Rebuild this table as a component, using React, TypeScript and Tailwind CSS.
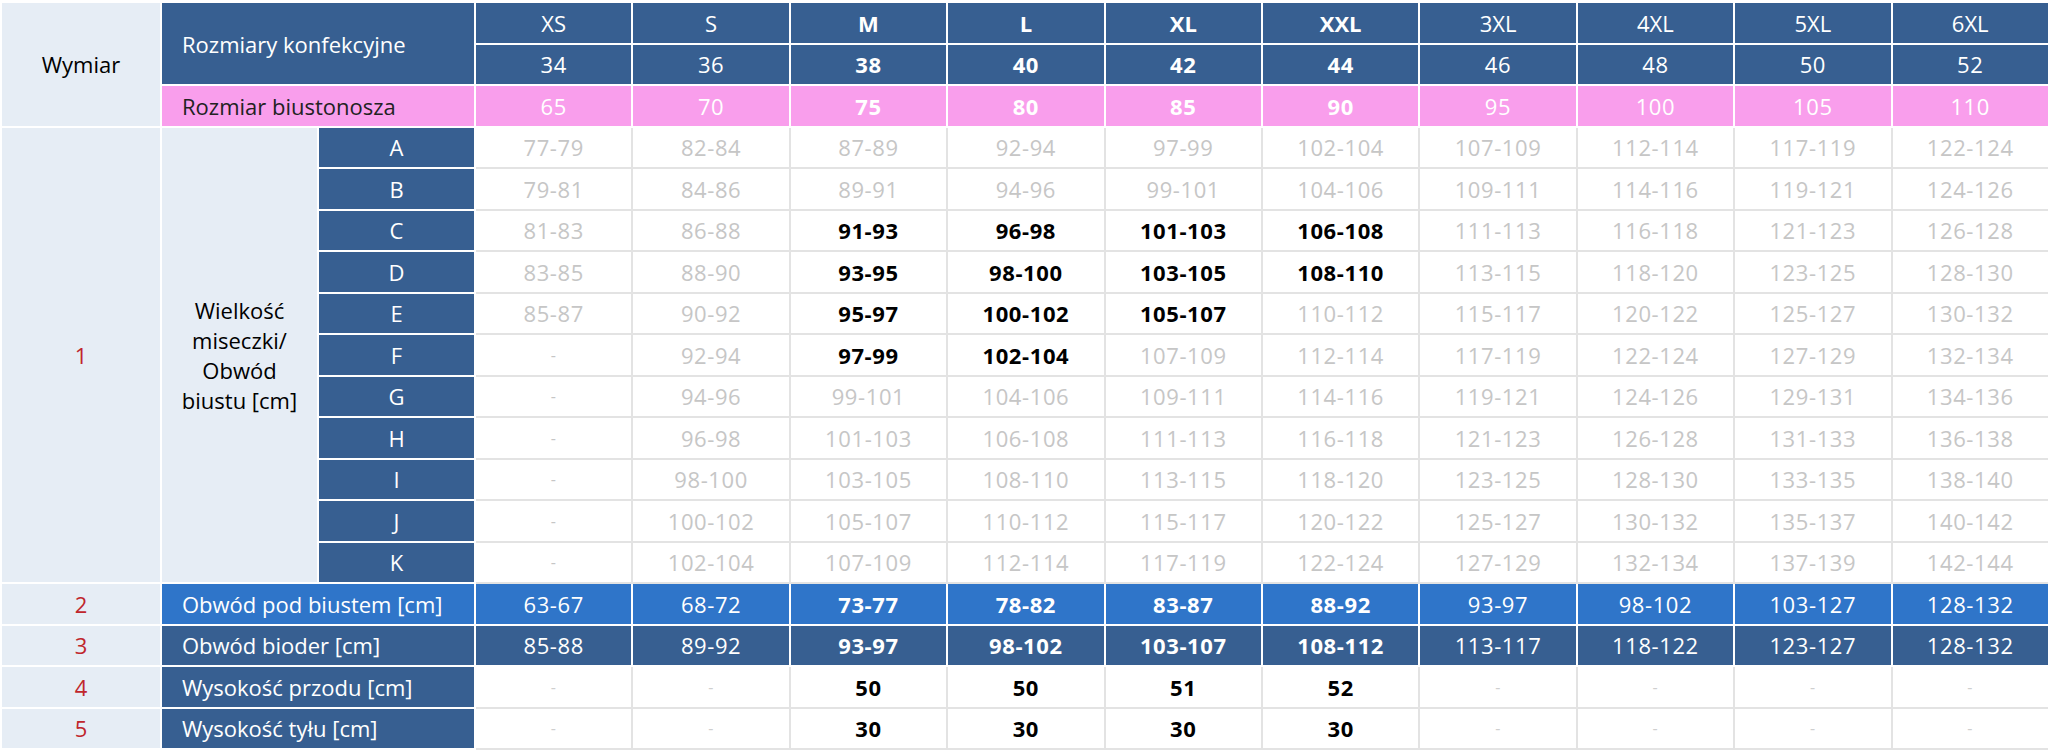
import React from 'react';

const sizes = ['XS', 'S', 'M', 'L', 'XL', 'XXL', '3XL', '4XL', '5XL', '6XL'];
const eu = ['34', '36', '38', '40', '42', '44', '46', '48', '50', '52'];
const bra = ['65', '70', '75', '80', '85', '90', '95', '100', '105', '110'];
const boldCols = [2, 3, 4, 5];

// cup rows: [letter, values, bold columns]
const cups: [string, string[], number[]][] = [
  ['A', ['77-79', '82-84', '87-89', '92-94', '97-99', '102-104', '107-109', '112-114', '117-119', '122-124'], []],
  ['B', ['79-81', '84-86', '89-91', '94-96', '99-101', '104-106', '109-111', '114-116', '119-121', '124-126'], []],
  ['C', ['81-83', '86-88', '91-93', '96-98', '101-103', '106-108', '111-113', '116-118', '121-123', '126-128'], [2, 3, 4, 5]],
  ['D', ['83-85', '88-90', '93-95', '98-100', '103-105', '108-110', '113-115', '118-120', '123-125', '128-130'], [2, 3, 4, 5]],
  ['E', ['85-87', '90-92', '95-97', '100-102', '105-107', '110-112', '115-117', '120-122', '125-127', '130-132'], [2, 3, 4]],
  ['F', ['-', '92-94', '97-99', '102-104', '107-109', '112-114', '117-119', '122-124', '127-129', '132-134'], [2, 3]],
  ['G', ['-', '94-96', '99-101', '104-106', '109-111', '114-116', '119-121', '124-126', '129-131', '134-136'], []],
  ['H', ['-', '96-98', '101-103', '106-108', '111-113', '116-118', '121-123', '126-128', '131-133', '136-138'], []],
  ['I', ['-', '98-100', '103-105', '108-110', '113-115', '118-120', '123-125', '128-130', '133-135', '138-140'], []],
  ['J', ['-', '100-102', '105-107', '110-112', '115-117', '120-122', '125-127', '130-132', '135-137', '140-142'], []],
  ['K', ['-', '102-104', '107-109', '112-114', '117-119', '122-124', '127-129', '132-134', '137-139', '142-144'], []],
];

const underBust = ['63-67', '68-72', '73-77', '78-82', '83-87', '88-92', '93-97', '98-102', '103-127', '128-132'];
const hips = ['85-88', '89-92', '93-97', '98-102', '103-107', '108-112', '113-117', '118-122', '123-127', '128-132'];
const front = ['-', '-', '50', '50', '51', '52', '-', '-', '-', '-'];
const back = ['-', '-', '30', '30', '30', '30', '-', '-', '-', '-'];

const cell = 'h-[41.5px] p-0 text-center align-middle';
const light = 'bg-[#e6edf5] border-2 border-white';
const dark = 'bg-[#375f91] text-white border-2 border-white';
const white = 'bg-white border-2 border-[#e3e3e3]';
const num = 'tracking-[0.6px]';

export default function App() {
  return (
    <div className="w-[2048px] h-[750px] bg-white pt-[1px] overflow-hidden" style={{ fontFamily: '"Open Sans", "Noto Sans", sans-serif' }}>
      <table className="w-[2048px] table-fixed border-collapse text-[22px] leading-none">
        <colgroup>
          <col className="w-[160px]" />
          <col className="w-[157px]" />
          <col className="w-[157px]" />
          {sizes.map((s) => (
            <col key={s} className="w-[157.4px]" />
          ))}
        </colgroup>
        <tbody>
          <tr>
            <td rowSpan={3} className={`${cell} ${light} text-black`}>Wymiar</td>
            <td rowSpan={2} colSpan={2} className={`${cell} ${dark} !text-left pl-5`}>Rozmiary konfekcyjne</td>
            {sizes.map((s, i) => (
              <td key={s} className={`${cell} ${dark} ${boldCols.includes(i) ? 'font-bold' : ''}`}>{s}</td>
            ))}
          </tr>
          <tr>
            {eu.map((s, i) => (
              <td key={s} className={`${cell} ${dark} ${num} ${boldCols.includes(i) ? 'font-bold' : ''}`}>{s}</td>
            ))}
          </tr>
          <tr>
            <td colSpan={2} className={`${cell} bg-[#f99eec] border-2 border-white !text-left pl-5 text-[#222]`}>Rozmiar biustonosza</td>
            {bra.map((s, i) => (
              <td key={s} className={`${cell} ${num} bg-[#f99eec] border-2 border-white text-white ${boldCols.includes(i) ? 'font-bold' : ''}`}>{s}</td>
            ))}
          </tr>

          {cups.map(([letter, vals, bold], r) => (
            <tr key={letter}>
              {r === 0 && (
                <>
                  <td rowSpan={11} className={`${cell} ${light} text-[#c0262c]`}>1</td>
                  <td rowSpan={11} className={`${cell} ${light} text-black leading-[30px] px-1`}>
                    Wielkość<br />miseczki/<br />Obwód<br />biustu [cm]
                  </td>
                </>
              )}
              <td className={`${cell} ${dark}`}>{letter}</td>
              {vals.map((v, i) => (
                <td
                  key={i}
                  className={`${cell} ${white} ${num} ${bold.includes(i) ? 'font-bold text-black' : 'text-[#c6c6c6]'} ${v === '-' ? 'text-[16px]' : ''}`}
                >
                  {v}
                </td>
              ))}
            </tr>
          ))}

          <tr>
            <td className={`${cell} ${light} text-[#c0262c]`}>2</td>
            <td colSpan={2} className={`${cell} bg-[#2f75c9] text-white border-2 border-white !text-left pl-5`}>Obwód pod biustem [cm]</td>
            {underBust.map((v, i) => (
              <td key={i} className={`${cell} ${num} bg-[#2f75c9] text-white border-2 border-white ${boldCols.includes(i) ? 'font-bold' : ''}`}>{v}</td>
            ))}
          </tr>
          <tr>
            <td className={`${cell} ${light} text-[#c0262c]`}>3</td>
            <td colSpan={2} className={`${cell} ${dark} !text-left pl-5`}>Obwód bioder [cm]</td>
            {hips.map((v, i) => (
              <td key={i} className={`${cell} ${dark} ${num} ${boldCols.includes(i) ? 'font-bold' : ''}`}>{v}</td>
            ))}
          </tr>
          <tr>
            <td className={`${cell} ${light} text-[#c0262c]`}>4</td>
            <td colSpan={2} className={`${cell} ${dark} !text-left pl-5`}>Wysokość przodu [cm]</td>
            {front.map((v, i) => (
              <td key={i} className={`${cell} ${white} ${num} ${v === '-' ? 'text-[#cfcfcf] text-[16px]' : 'font-bold text-black'}`}>{v}</td>
            ))}
          </tr>
          <tr>
            <td className={`${cell} ${light} text-[#c0262c]`}>5</td>
            <td colSpan={2} className={`${cell} ${dark} !text-left pl-5`}>Wysokość tyłu [cm]</td>
            {back.map((v, i) => (
              <td key={i} className={`${cell} ${white} ${num} ${v === '-' ? 'text-[#cfcfcf] text-[16px]' : 'font-bold text-black'}`}>{v}</td>
            ))}
          </tr>
        </tbody>
      </table>
    </div>
  );
}
